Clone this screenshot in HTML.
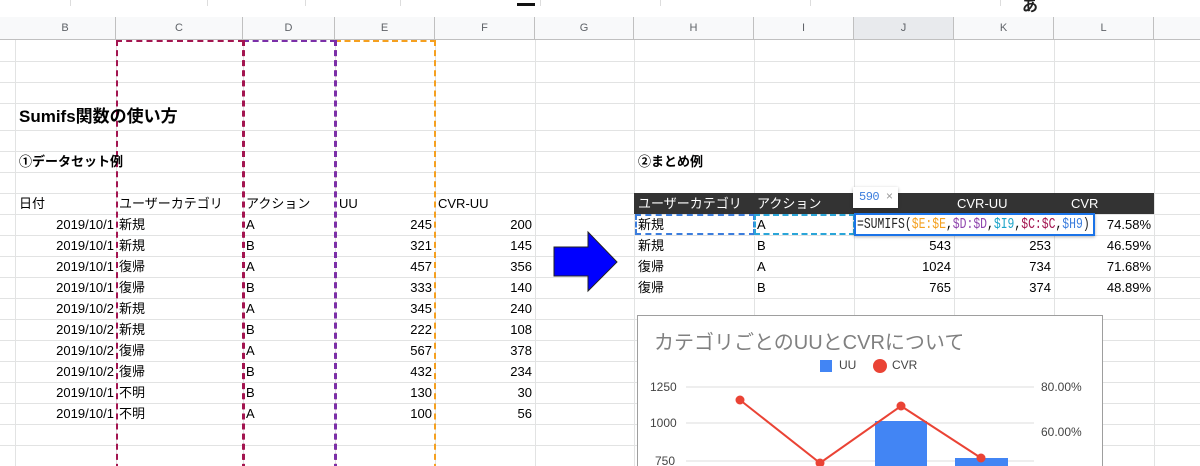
<!DOCTYPE html>
<html style="width:1200px;height:466px;overflow:hidden"><head><meta charset="utf-8"><style>
*{margin:0;padding:0;box-sizing:border-box}
body{width:1200px;height:466px;overflow:hidden;background:#fff;position:relative;font-family:"Liberation Sans","Noto Sans CJK JP",sans-serif;font-size:13px;color:#000}
.a{position:absolute}
.hl{position:absolute;left:0;width:1200px;height:1px;background:#e2e3e3}
.vl{position:absolute;top:17px;width:1px;height:449px;background:#e2e3e3}
.ch{position:absolute;top:17px;height:23px;line-height:23px;text-align:center;font-size:11px;color:#5f6368;background:#f8f9fa;border-right:1px solid #c0c0c0;border-bottom:1px solid #c0c0c0}
.t{position:absolute;height:21px;line-height:21px;white-space:nowrap;font-size:13px}
.r{text-align:right}
</style></head><body>
<div class="a" style="left:0;top:0;width:1200px;height:17px;background:#fff"></div>
<div class="a" style="left:70px;top:0;width:1px;height:6px;background:#ddd"></div>
<div class="a" style="left:207px;top:0;width:1px;height:6px;background:#ddd"></div>
<div class="a" style="left:305px;top:0;width:1px;height:6px;background:#ddd"></div>
<div class="a" style="left:400px;top:0;width:1px;height:6px;background:#ddd"></div>
<div class="a" style="left:540px;top:0;width:1px;height:6px;background:#ddd"></div>
<div class="a" style="left:660px;top:0;width:1px;height:6px;background:#ddd"></div>
<div class="a" style="left:810px;top:0;width:1px;height:6px;background:#ddd"></div>
<div class="a" style="left:1000px;top:0;width:1px;height:6px;background:#ddd"></div>
<div class="a" style="left:517px;top:3px;width:18px;height:3px;background:#111"></div>
<div class="a" style="left:1022px;top:-8px;font-size:16px;font-weight:bold;color:#222">あ</div>
<div class="hl" style="top:61px"></div><div class="hl" style="top:82px"></div><div class="hl" style="top:103px"></div><div class="hl" style="top:130px"></div><div class="hl" style="top:151px"></div><div class="hl" style="top:172px"></div><div class="hl" style="top:193px"></div><div class="hl" style="top:214px"></div><div class="hl" style="top:235px"></div><div class="hl" style="top:256px"></div><div class="hl" style="top:277px"></div><div class="hl" style="top:298px"></div><div class="hl" style="top:319px"></div><div class="hl" style="top:340px"></div><div class="hl" style="top:361px"></div><div class="hl" style="top:382px"></div><div class="hl" style="top:403px"></div><div class="hl" style="top:424px"></div><div class="hl" style="top:445px"></div>
<div class="vl" style="left:15px"></div><div class="vl" style="left:116px"></div><div class="vl" style="left:243px"></div><div class="vl" style="left:335px"></div><div class="vl" style="left:435px"></div><div class="vl" style="left:535px"></div><div class="vl" style="left:634px"></div><div class="vl" style="left:754px"></div><div class="vl" style="left:854px"></div><div class="vl" style="left:954px"></div><div class="vl" style="left:1054px"></div><div class="vl" style="left:1154px"></div>
<div class="ch" style="left:0;width:16px"></div>
<div class="ch" style="left:15px;width:101px">B</div><div class="ch" style="left:116px;width:127px">C</div><div class="ch" style="left:243px;width:92px">D</div><div class="ch" style="left:335px;width:100px">E</div><div class="ch" style="left:435px;width:100px">F</div><div class="ch" style="left:535px;width:99px">G</div><div class="ch" style="left:634px;width:120px">H</div><div class="ch" style="left:754px;width:100px">I</div><div class="ch" style="left:854px;width:100px;background:#e8eaed">J</div><div class="ch" style="left:954px;width:100px">K</div><div class="ch" style="left:1054px;width:100px">L</div><div class="ch" style="left:1154px;width:46px;border-right:none"></div>
<div class="a" style="left:116px;top:40px;width:128px;height:440px;border:2px dashed #a31550"></div>
<div class="a" style="left:243px;top:40px;width:93px;height:440px;border:2px dashed #7b2fa8;border-left:none"></div>
<div class="a" style="left:243px;top:40px;width:2px;height:440px;border-left:2px dashed #a31550"></div>
<div class="a" style="left:335px;top:40px;width:101px;height:440px;border:2px dashed #f5a020"></div>
<div class="a" style="left:335px;top:40px;width:2px;height:440px;border-left:2px dashed #7b2fa8"></div>
<div class="t" style="left:19px;top:106px;font-size:17px;font-weight:bold;line-height:22px">Sumifs関数の使い方</div>
<div class="t" style="left:19px;top:151px;font-weight:bold">①データセット例</div>
<div class="t" style="left:638px;top:151px;font-weight:bold">②まとめ例</div>
<div class="t" style="left:19px;top:193px">日付</div><div class="t" style="left:119px;top:193px">ユーザーカテゴリ</div><div class="t" style="left:246px;top:193px">アクション</div><div class="t" style="left:339px;top:193px">UU</div><div class="t" style="left:438px;top:193px">CVR-UU</div>
<div class="t r" style="left:15px;width:99px;top:214px">2019/10/1</div><div class="t" style="left:119px;top:214px">新規</div><div class="t" style="left:246px;top:214px">A</div><div class="t r" style="left:335px;width:97px;top:214px">245</div><div class="t r" style="left:435px;width:97px;top:214px">200</div>
<div class="t r" style="left:15px;width:99px;top:235px">2019/10/1</div><div class="t" style="left:119px;top:235px">新規</div><div class="t" style="left:246px;top:235px">B</div><div class="t r" style="left:335px;width:97px;top:235px">321</div><div class="t r" style="left:435px;width:97px;top:235px">145</div>
<div class="t r" style="left:15px;width:99px;top:256px">2019/10/1</div><div class="t" style="left:119px;top:256px">復帰</div><div class="t" style="left:246px;top:256px">A</div><div class="t r" style="left:335px;width:97px;top:256px">457</div><div class="t r" style="left:435px;width:97px;top:256px">356</div>
<div class="t r" style="left:15px;width:99px;top:277px">2019/10/1</div><div class="t" style="left:119px;top:277px">復帰</div><div class="t" style="left:246px;top:277px">B</div><div class="t r" style="left:335px;width:97px;top:277px">333</div><div class="t r" style="left:435px;width:97px;top:277px">140</div>
<div class="t r" style="left:15px;width:99px;top:298px">2019/10/2</div><div class="t" style="left:119px;top:298px">新規</div><div class="t" style="left:246px;top:298px">A</div><div class="t r" style="left:335px;width:97px;top:298px">345</div><div class="t r" style="left:435px;width:97px;top:298px">240</div>
<div class="t r" style="left:15px;width:99px;top:319px">2019/10/2</div><div class="t" style="left:119px;top:319px">新規</div><div class="t" style="left:246px;top:319px">B</div><div class="t r" style="left:335px;width:97px;top:319px">222</div><div class="t r" style="left:435px;width:97px;top:319px">108</div>
<div class="t r" style="left:15px;width:99px;top:340px">2019/10/2</div><div class="t" style="left:119px;top:340px">復帰</div><div class="t" style="left:246px;top:340px">A</div><div class="t r" style="left:335px;width:97px;top:340px">567</div><div class="t r" style="left:435px;width:97px;top:340px">378</div>
<div class="t r" style="left:15px;width:99px;top:361px">2019/10/2</div><div class="t" style="left:119px;top:361px">復帰</div><div class="t" style="left:246px;top:361px">B</div><div class="t r" style="left:335px;width:97px;top:361px">432</div><div class="t r" style="left:435px;width:97px;top:361px">234</div>
<div class="t r" style="left:15px;width:99px;top:382px">2019/10/1</div><div class="t" style="left:119px;top:382px">不明</div><div class="t" style="left:246px;top:382px">B</div><div class="t r" style="left:335px;width:97px;top:382px">130</div><div class="t r" style="left:435px;width:97px;top:382px">30</div>
<div class="t r" style="left:15px;width:99px;top:403px">2019/10/1</div><div class="t" style="left:119px;top:403px">不明</div><div class="t" style="left:246px;top:403px">A</div><div class="t r" style="left:335px;width:97px;top:403px">100</div><div class="t r" style="left:435px;width:97px;top:403px">56</div>
<svg class="a" style="left:550px;top:230px" width="72" height="64"><polygon points="4,17 38,17 38,2 67,32 38,61 38,46 4,46" fill="#0000ff" stroke="#222" stroke-width="1"/></svg>
<div class="a" style="left:634px;top:193px;width:520px;height:21px;background:#333"></div>
<div class="t" style="left:638px;top:193px;color:#fff">ユーザーカテゴリ</div><div class="t" style="left:757px;top:193px;color:#fff">アクション</div><div class="t" style="left:957px;top:193px;color:#fff">CVR-UU</div><div class="t" style="left:1071px;top:193px;color:#fff">CVR</div>
<div class="t" style="left:638px;top:214px">新規</div><div class="t" style="left:757px;top:214px">A</div><div class="t r" style="left:1054px;width:97px;top:214px">74.58%</div>
<div class="t" style="left:638px;top:235px">新規</div><div class="t" style="left:757px;top:235px">B</div><div class="t r" style="left:854px;width:97px;top:235px">543</div><div class="t r" style="left:954px;width:97px;top:235px">253</div><div class="t r" style="left:1054px;width:97px;top:235px">46.59%</div>
<div class="t" style="left:638px;top:256px">復帰</div><div class="t" style="left:757px;top:256px">A</div><div class="t r" style="left:854px;width:97px;top:256px">1024</div><div class="t r" style="left:954px;width:97px;top:256px">734</div><div class="t r" style="left:1054px;width:97px;top:256px">71.68%</div>
<div class="t" style="left:638px;top:277px">復帰</div><div class="t" style="left:757px;top:277px">B</div><div class="t r" style="left:854px;width:97px;top:277px">765</div><div class="t r" style="left:954px;width:97px;top:277px">374</div><div class="t r" style="left:1054px;width:97px;top:277px">48.89%</div>
<div class="a" style="left:635px;top:214px;width:120px;height:21px;border:2px dashed #3b7ddd"></div>
<div class="a" style="left:754px;top:214px;width:101px;height:21px;border:2px dashed #2aa5d8"></div>
<div class="a" style="left:854px;top:213px;width:241px;height:23px;border:2px solid #1a73e8;background:#fff;box-shadow:0 1px 3px rgba(0,0,0,.3)"></div>
<div class="a" style="left:857px;top:214px;height:21px;line-height:21px;font-family:'Liberation Mono',monospace;font-size:15px;white-space:nowrap;transform:scaleX(0.76);transform-origin:0 0"><span style="color:#222">=SUMIFS(</span><span style="color:#f4a020">$E:$E</span>,<span style="color:#8e44ad">$D:$D</span>,<span style="color:#1aa3c8">$I9</span>,<span style="color:#a31550">$C:$C</span>,<span style="color:#3b7ddd">$H9</span><span style="color:#222">)</span></div>
<div class="a" style="left:853px;top:187px;width:45px;height:21px;background:#fff;box-shadow:0 1px 3px rgba(0,0,0,.3);font-family:'Liberation Mono',monospace;font-size:12px;line-height:21px;padding-left:6px;color:#3b7ddd;letter-spacing:-0.5px">590 <span style="color:#999">×</span></div>
<div class="a" style="left:637px;top:315px;width:466px;height:160px;border:1px solid #9e9e9e;background:#fff"></div>
<div class="a" style="left:654px;top:326px;font-size:20px;color:#808080;white-space:nowrap">カテゴリごとのUUとCVRについて</div>
<div class="a" style="left:820px;top:360px;width:12px;height:12px;background:#4285f4"></div>
<div class="a" style="left:839px;top:358px;font-size:12px;color:#444">UU</div>
<div class="a" style="left:873px;top:359px;width:14px;height:14px;border-radius:50%;background:#ea4335"></div>
<div class="a" style="left:892px;top:358px;font-size:12px;color:#444">CVR</div>
<div class="a" style="left:650px;top:380px;font-size:12px;color:#444">1250</div>
<div class="a" style="left:650px;top:416px;font-size:12px;color:#444">1000</div>
<div class="a" style="left:655px;top:454px;font-size:12px;color:#444">750</div>
<div class="a" style="left:1041px;top:380px;font-size:12px;color:#444">80.00%</div>
<div class="a" style="left:1041px;top:425px;font-size:12px;color:#444">60.00%</div>
<svg class="a" style="left:638px;top:316px" width="465" height="150">
<line x1="48" y1="71" x2="396" y2="71" stroke="#ddd"/><line x1="48" y1="107" x2="396" y2="107" stroke="#ddd"/><line x1="48" y1="145" x2="396" y2="145" stroke="#ddd"/>
<rect x="237" y="105" width="52" height="50" fill="#4285f4"/><rect x="317" y="142" width="53" height="20" fill="#4285f4"/>
<polyline points="102,84 182,147 263,90 343,142" fill="none" stroke="#ea4335" stroke-width="2"/>
<circle cx="102" cy="84" r="4.5" fill="#ea4335"/><circle cx="182" cy="147" r="4.5" fill="#ea4335"/><circle cx="263" cy="90" r="4.5" fill="#ea4335"/><circle cx="343" cy="142" r="4.5" fill="#ea4335"/>
</svg>
</body></html>
